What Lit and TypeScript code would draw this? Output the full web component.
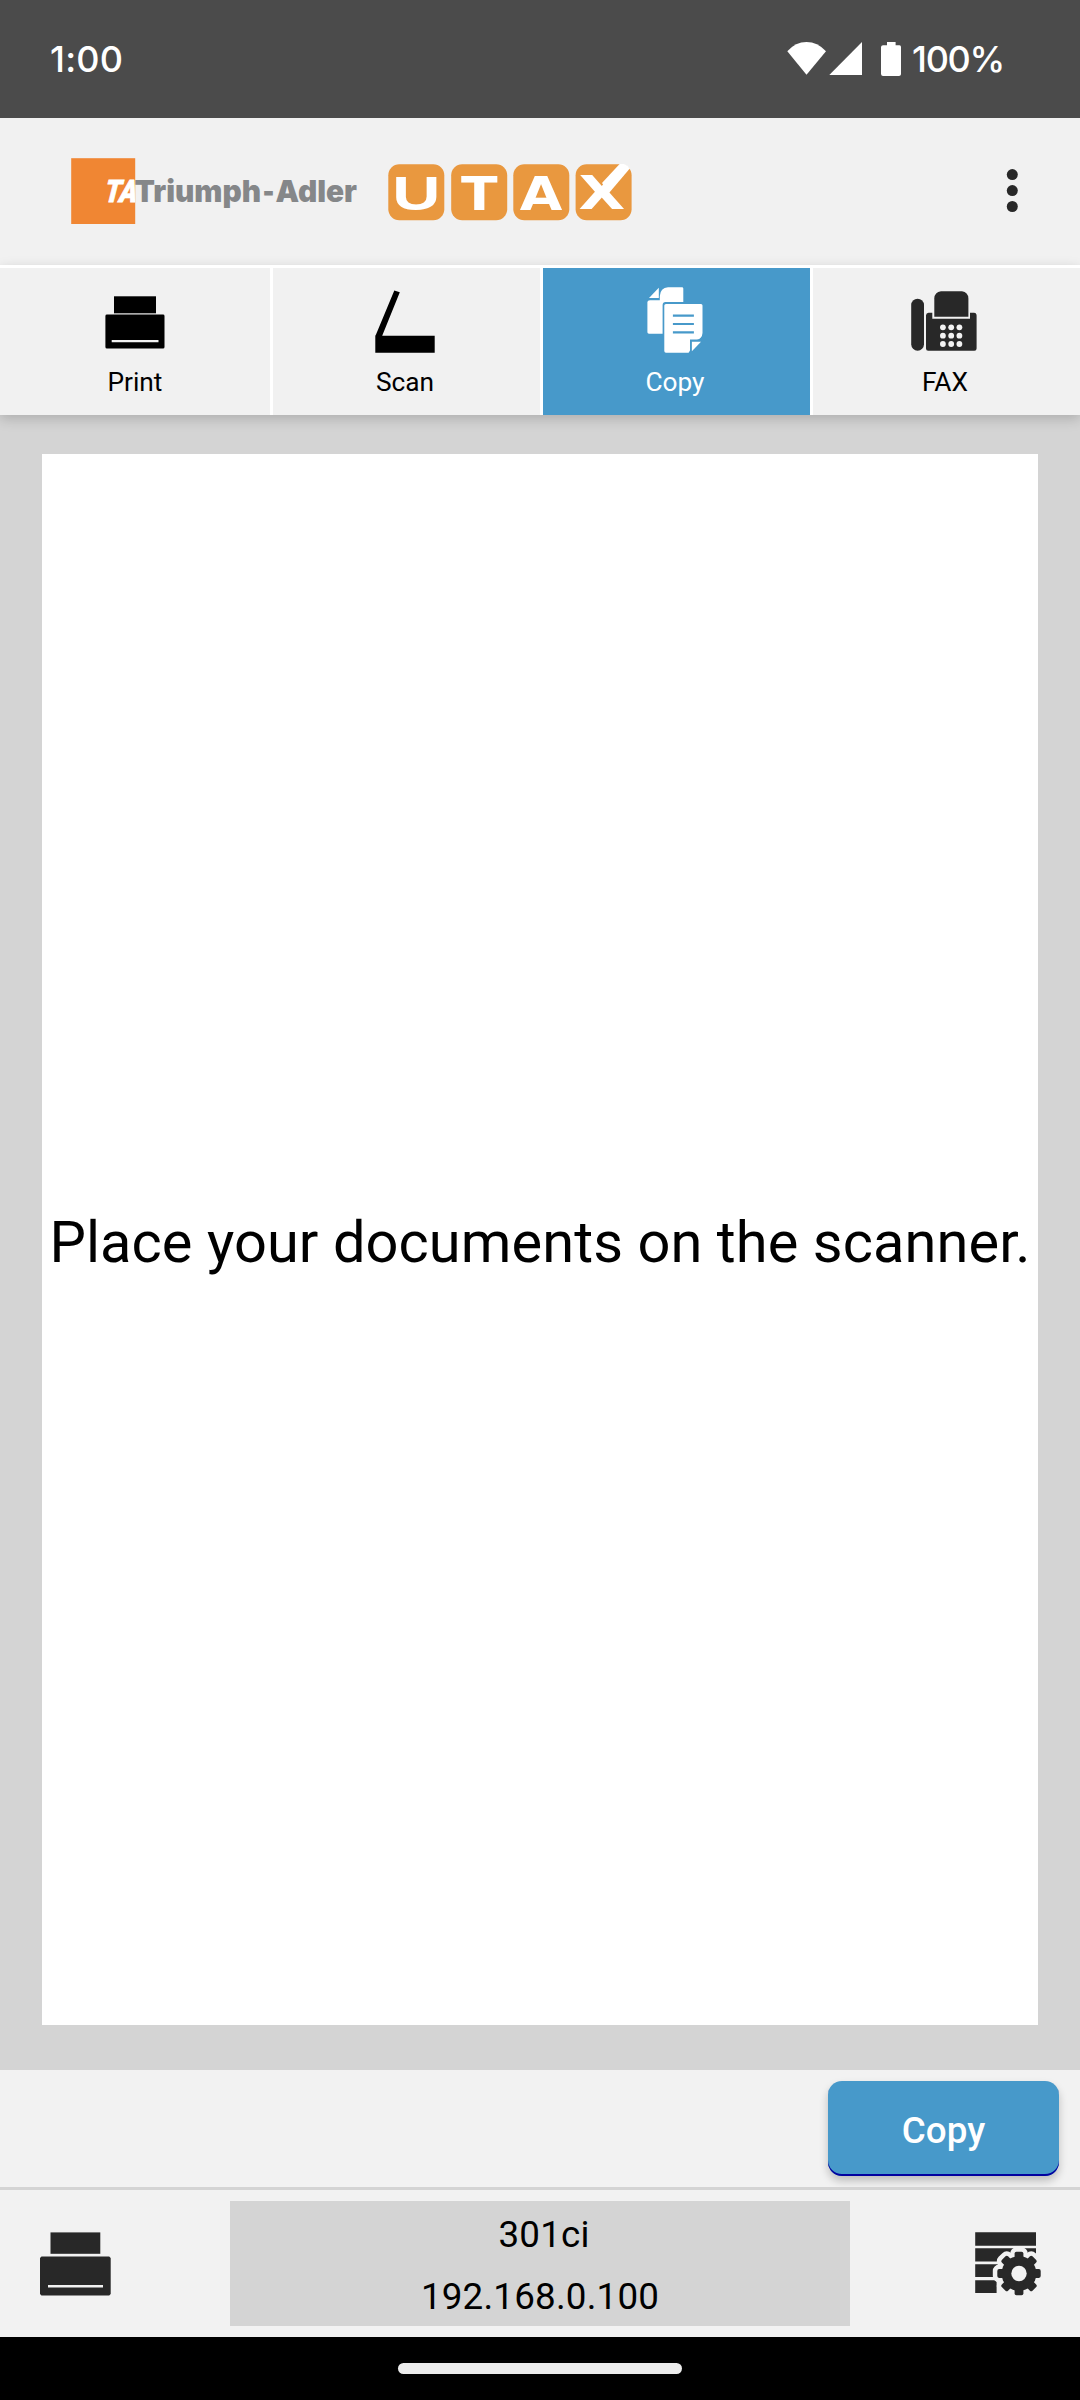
import { LitElement, html, css, svg } from "lit";
import { customElement, state } from "lit/decorators.js";
import { classMap } from "lit/directives/class-map.js";

const printIcon = html`<svg width="60" height="53" viewBox="105 296 60 53">
  <rect x="114" y="296.3" width="42" height="17" />
  <path fill-rule="evenodd" d="M107 314.6H163Q164.5 314.6 164.5 316V347Q164.5 348.6 163 348.6H107Q105.4 348.6 105.4 347V316Q105.4 314.6 107 314.6ZM111.7 340V342.2H158.5V340Z" />
</svg>`;

const scanIcon = html`<svg width="60" height="64" viewBox="375 290 60 64">
  <path d="M375.3 335.7L376 334.5L394.3 290.4L399.8 292.2L382.2 335.7H434.7V352.7H375.3Z" />
</svg>`;

const copyIcon = html`<svg width="56" height="66" viewBox="647 287 56 66">
  <path d="M649 298L658.8 287.8V298Z" />
  <path d="M647.4 302Q647.6 300.4 650 300.3H659.8V296Q660.4 287.8 668 287.3H682Q683.3 287.3 683.3 288.5V302H665.5Q662.7 302.2 662.6 305V333.7H649Q647.4 333.7 647.4 332.3Z" />
  <path d="M666 304.1H701Q702.5 304.1 702.5 305.6V333Q702 338.8 697 339.6H690V350.5L688.6 352.7H666Q664.3 352.7 664.3 351V305.6Q664.3 304.1 666 304.1Z" />
  <path d="M691.9 341.8H701L691.9 351.3Z" />
  <path class="cut" d="M672.9 315.7H693.9M672.9 324H693.9M672.9 332.3H693.9" />
</svg>`;

const faxKeys = [327.3, 335.7, 344].flatMap((y) => [942.9, 951.2, 959.4].map((x) => ({ x, y })));
const faxIcon = html`<svg class="soft" width="66" height="60" viewBox="911 291 66 60">
  <rect x="911.2" y="298.7" width="12.8" height="52" rx="6.4" />
  <path d="M928.5 312.7H932.3V318.7H970V312.7H974Q976.6 312.9 976.6 315.5V348.5Q976.6 350.7 974.4 350.7H928.2Q926 350.7 926 348.5V315.2Q926.2 312.9 928.5 312.7Z" />
  <path d="M934.3 316.7V298.5Q934.6 292 941 291.3H962Q968 292 968.4 298.5V316.7Z" />
  ${faxKeys.map((k) => svg`<circle class="key" cx=${k.x} cy=${k.y} r="2.9" />`)}
</svg>`;

const deviceIcon = html`<svg class="soft" width="72" height="64" viewBox="40 2232 72 64">
  <rect x="50.5" y="2232.4" width="49.8" height="21.4" />
  <path fill-rule="evenodd" d="M41.5 2256.4H109.2L110.7 2257.9V2294L109.2 2295.5H41.5L40 2294V2257.9ZM48 2285V2287.6H103V2285Z" />
</svg>`;

const teeth = [0, 45, 90, 135, 180, 225, 270, 315];
const gearBody = svg`<circle cx="1019" cy="2273.5" r="17.4" />
  ${teeth.map((a) => svg`<rect x="1014.6" y="2251.8" width="8.8" height="12" rx="1.8" transform="rotate(${a} 1019 2273.5)" />`)}`;
const settingsIcon = html`<svg class="soft" width="68" height="66" viewBox="975 2231 68 66">
  <path d="M975.2 2232.3H1036V2245.8H975.2ZM975.2 2248.3H1036V2261.5H975.2ZM975.2 2264.2H1010V2277H975.2ZM975.2 2280.2H996.6V2293H975.2Z" />
  <g class="halo">${gearBody}</g>
  <g>${gearBody}</g>
  <circle class="key" cx="1019" cy="2273.5" r="7.7" />
</svg>`;

const brandLogo = html`<svg class="brand" width="561" height="66" viewBox="71 158 561 66">
  <defs><clipPath id="sq"><rect x="71" y="158" width="64.2" height="66.5" /></clipPath></defs>
  <rect x="71.2" y="158.2" width="64" height="66" fill="#f08633" />
  <g clip-path="url(#sq)">
    <text class="ta" transform="translate(104.2 202) skewX(-6) scale(.86 1)">TA</text>
  </g>
  <text class="ta-name" x="134.5" y="202" textLength="126.5" lengthAdjust="spacingAndGlyphs">Triumph</text>
  <text class="ta-name" x="262.5" y="202" textLength="12" lengthAdjust="spacingAndGlyphs">-</text>
  <text class="ta-name" x="275.5" y="202" textLength="81.5" lengthAdjust="spacingAndGlyphs">Adler</text>
  ${[388.3, 451.2, 513.3, 575.6].map((x) => svg`<rect x=${x} y="164.2" width="56" height="56" rx="11" fill="#e9983f" />`)}
  <text class="utax narrow" transform="translate(392.3 210) scale(1.36 1)">U</text>
  <text class="utax" transform="translate(461 210) scale(1.15 1)">T</text>
  <text class="utax" transform="translate(519.8 210) scale(1.18 1)">A</text>
  <text class="utax" transform="translate(578.6 209) scale(1.3 1)">X</text>
  <path d="M602 183L619.6 164H624Q628 165 629.8 168.6L609 193Z" fill="#fff" />
</svg>`;

@customElement("status-bar")
class StatusBar extends LitElement {
  static styles = css`
    :host { display: flex; justify-content: space-between; height: 118px; box-sizing: border-box; padding: 34px 73px 0 50px; background: #4b4b4b; color: #fff; font: 500 36px/50px Inter, sans-serif; }
    .right { display: flex; }
    .icons { margin: 7px 10px 0 0; fill: #fff; }
    .time { letter-spacing: .2px; }
    .pct { width: 95px; letter-spacing: -1.3px; white-space: nowrap; }
  `;
  render() {
    return html`<span class="time">1:00</span>
      <span class="right">
        <svg class="icons" width="115" height="36" viewBox="787 41 115 36">
          <path d="M787.3 51.3Q795.5 42.2 806.5 42.1Q817.5 42.2 826 51.3L806.5 74.8Z" />
          <path d="M829.3 75L862 42V75Z" />
          <path d="M887 42H895.6V45.2H899.5Q901 45.4 901 47V74.3Q900.8 76 899 76H883Q881.2 75.8 881 74V47Q881.2 45.3 883 45.2H887Z" />
        </svg>
        <span class="pct">100%</span>
      </span>`;
  }
}

@customElement("app-root")
class AppRoot extends LitElement {
  @state() private active = "Copy";

  private tabs = [
    { label: "Print", icon: printIcon, cls: "print" },
    { label: "Scan", icon: scanIcon, cls: "scan" },
    { label: "Copy", icon: copyIcon, cls: "copy" },
    { label: "FAX", icon: faxIcon, cls: "fax" },
  ];

  static styles = css`
    :host { display: flex; flex-direction: column; height: 2400px; width: 1080px; overflow: hidden; background: #d4d4d4; color: #000; font-family: Roboto, sans-serif; }
    svg { display: block; flex: none; }
    .soft { fill: #282828; }
    .key { fill: #f2f2f2; }
    .halo { fill: #f2f2f2; stroke: #f2f2f2; stroke-width: 9; }
    header { display: flex; justify-content: space-between; height: 147px; box-sizing: border-box; padding: 40px 62px 0 71px; background: #f1f1f1; }
    .dots { margin-top: 10px; fill: #282828; }
    .ta { font: italic 900 31px Roboto, sans-serif; fill: #fff; stroke: #fff; stroke-width: .8; }
    .ta-name { font: 900 30.3px Inter, sans-serif; fill: #858789; }
    .utax { font: bold 46.6px "DejaVu Sans", sans-serif; fill: #fff; }
    .narrow { font: bold 49px "Liberation Sans", sans-serif; }
    nav { display: grid; grid-template-columns: 270px 267px 267px 267px; column-gap: 3px; height: 150px; box-sizing: border-box; border-top: 3px solid #fff; background: #fff; box-shadow: 0 4px 12px rgba(0, 0, 0, .18); z-index: 1; }
    .tab { display: flex; flex-direction: column; align-items: center; background: #f1f1f1; font-size: 26.25px; cursor: pointer; }
    .tab + .tab { padding-right: 3px; }
    .tab.active { background: #4799ca; color: #fff; }
    .pic { height: 99px; box-sizing: border-box; }
    .print .pic { padding-top: 28px; }
    .scan .pic { padding-top: 22px; }
    .copy .pic { padding-top: 19px; fill: #fff; }
    .fax .pic { padding: 23px 2px 0 0; }
    .cut { stroke: #4799ca; stroke-width: 2.2; fill: none; }
    .label { line-height: 30px; }
    main { flex: 1; padding: 39px 42px 45px; display: flex; }
    .sheet { flex: 1; background: #fff; display: flex; align-items: center; justify-content: center; padding-top: 4px; font-size: 57.75px; letter-spacing: .08px; white-space: nowrap; }
    .actions { height: 117px; box-sizing: border-box; background: #f2f2f2; display: flex; justify-content: flex-end; padding: 11px 21px 0 0; }
    .go { width: 231px; height: 95px; box-sizing: border-box; padding: 3px 0 0; border: 0; border-radius: 14px; background: #4799ca; color: #fff; font: 500 36.75px Roboto, sans-serif; box-shadow: inset 0 -2px 0 #0202a0, 0 5px 8px rgba(0, 0, 0, .22); }
    footer { height: 150px; box-sizing: border-box; border-top: 3px solid #d4d4d4; background: #f2f2f2; display: flex; justify-content: space-between; padding: 11px 37px 11px 40px; }
    .device { margin-top: 31px; }
    .settings { margin-top: 30px; }
    .info { width: 620px; margin-left: 21px; box-sizing: border-box; padding-top: 3px; background: #d4d4d4; display: flex; flex-direction: column; align-items: center; font-size: 36.75px; line-height: 61.5px; letter-spacing: .2px; }
    .model { padding-left: 8px; }
    .info + .settings { margin-left: 28px; }
    .home { height: 63px; background: #000; display: flex; justify-content: center; padding-top: 26px; box-sizing: border-box; }
    .pill { width: 284px; height: 11px; border-radius: 6px; background: #ececec; }
  `;

  render() {
    return html`
      <status-bar></status-bar>
      <header>
        ${brandLogo}
        <svg class="dots" width="12" height="46" viewBox="1006 168 12 46">
          <circle cx="1012.3" cy="174.6" r="5.5" /><circle cx="1012.3" cy="190.6" r="5.5" /><circle cx="1012.3" cy="206.5" r="5.5" />
        </svg>
      </header>
      <nav>
        ${this.tabs.map((t) => html`
          <div class=${classMap({ tab: true, [t.cls]: true, active: t.label === this.active })} @click=${() => (this.active = t.label)}>
            <div class="pic">${t.icon}</div>
            <div class="label">${t.label}</div>
          </div>`)}
      </nav>
      <main><div class="sheet">Place your documents on the scanner.</div></main>
      <div class="actions"><button class="go">Copy</button></div>
      <footer>
        <div class="device">${deviceIcon}</div>
        <div class="info"><span class="model">301ci</span><span>192.168.0.100</span></div>
        <div class="settings">${settingsIcon}</div>
      </footer>
      <div class="home"><div class="pill"></div></div>
    `;
  }
}
